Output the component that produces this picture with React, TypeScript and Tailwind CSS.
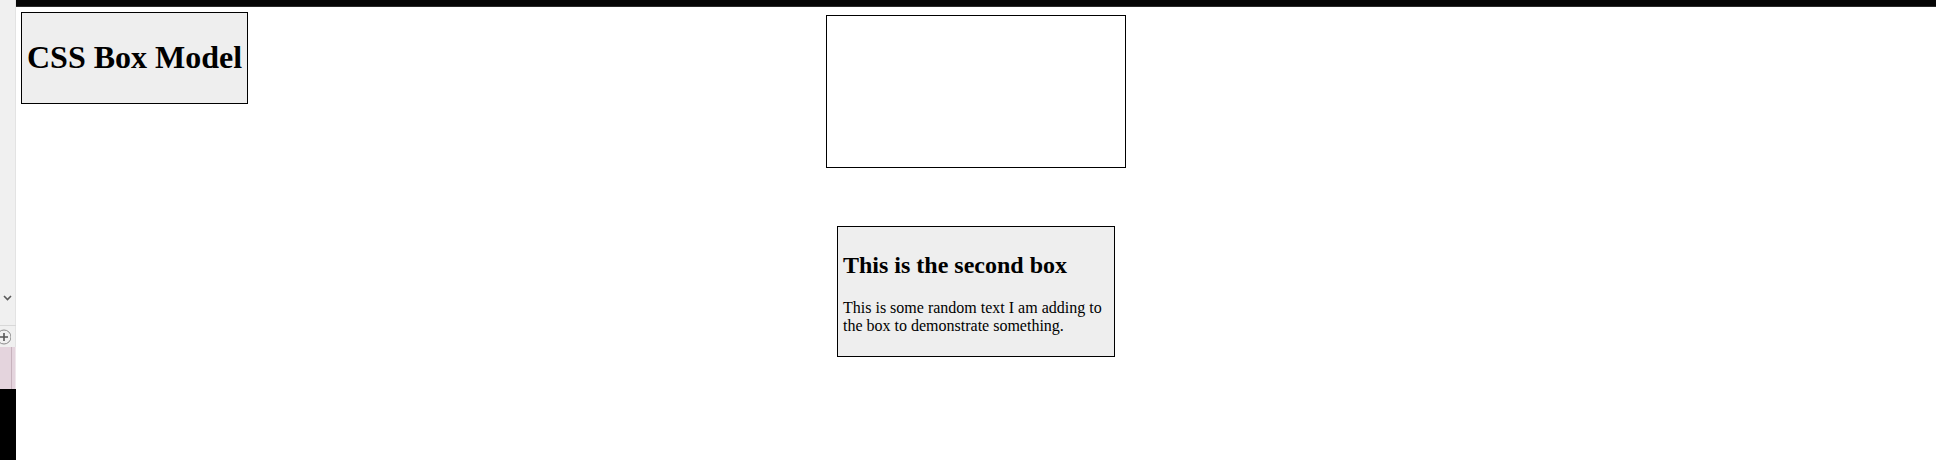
import React from "react";

export default function App() {
  const serif = { fontFamily: '"Liberation Serif", "Times New Roman", serif' };
  return (
    <div className="flex w-[1936px] h-[460px] overflow-hidden bg-white text-black" style={serif}>
      {/* left browser strip */}
      <div className="flex flex-col w-[16px] h-[460px] shrink-0">
        <div className="h-[325px] bg-[#f0f0f0] border-r border-[#e3e3e3] flex flex-col justify-end items-center pb-[24px]">
          <svg width="9" height="6" viewBox="0 0 9 6" className="ml-[-1px]">
            <path d="M1 1 L4.5 4.5 L8 1" fill="none" stroke="#5a5a5a" strokeWidth="1.6" />
          </svg>
        </div>
        <div className="h-[1px] bg-[#d8d8d8]" />
        <div className="h-[21px] bg-[#f0f0f0] border-r border-[#e3e3e3] overflow-hidden flex items-center">
          <svg width="14" height="18" viewBox="0 0 14 18" className="ml-[-3px]">
            <circle cx="7" cy="9" r="7" fill="none" stroke="#8a8a8a" strokeWidth="1" />
            <path d="M3 9 H11 M7 5 V13" stroke="#555" strokeWidth="1.6" />
          </svg>
        </div>
        <div className="h-[42px] bg-[#e4d4dd] flex">
          <div className="w-[11px]" />
          <div className="w-[1px] bg-[#c7b2bd]" />
          <div className="w-[3px]" />
          <div className="w-[1px] bg-[#efe6eb]" />
        </div>
        <div className="flex-1 bg-black" />
      </div>

      {/* main page */}
      <div className="flex-1 flex flex-col">
        <div className="h-[6px] bg-[#050505]" />
        <div className="h-[1px] bg-[#2a2a2a]" />
        <div className="grid">
          <div className="col-start-1 row-start-1 justify-self-start self-start mt-[5px] ml-[5px] border border-black bg-[#eeeeee] p-[5px]">
            <h1 className="text-[32px] font-bold my-[21.44px] leading-[normal] whitespace-nowrap">CSS Box Model</h1>
          </div>
          <div className="col-start-1 row-start-1 justify-self-center self-start mt-[8px] w-[300px] h-[153px] border border-black" />
        </div>
        <div className="flex justify-center mt-[58px]">
          <div className="w-[278px] border border-black bg-[#eeeeee] px-[5px] py-[5px]">
            <h2 className="text-[24px] font-bold my-[19.92px] leading-[normal]">This is the second box</h2>
            <p className="text-[16px] my-[16px] leading-[normal]">
              This is some random text I am adding to the box to demonstrate something.
            </p>
          </div>
        </div>
      </div>
    </div>
  );
}
